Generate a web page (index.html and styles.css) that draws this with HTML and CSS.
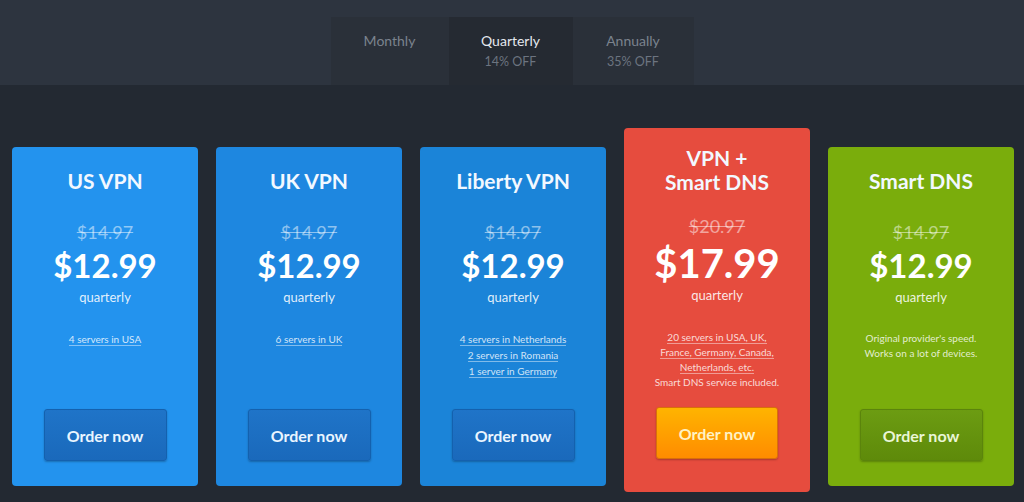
FILE: index.html
```html
<!DOCTYPE html>
<html lang="en">
<head>
  <meta charset="UTF-8">
  <title>Pricing</title>
  <link rel="stylesheet" href="styles.css">
</head>
<body>

  <div class="top">
    <div class="tabs">
      <div class="tab">Monthly</div>
      <div class="tab active">Quarterly<span>14% OFF</span></div>
      <div class="tab">Annually<span>35% OFF</span></div>
    </div>
  </div>

  <div class="plans">
    <div class="plan blue1">
      <h2>US VPN</h2>
      <div class="old">$14.97</div>
      <div class="price">$12.99</div>
      <div class="period">quarterly</div>
      <div class="info"><a>4 servers in USA</a></div>
      <button class="order">Order now</button>
    </div>

    <div class="plan blue2">
      <h2>UK VPN</h2>
      <div class="old">$14.97</div>
      <div class="price">$12.99</div>
      <div class="period">quarterly</div>
      <div class="info"><a>6 servers in UK</a></div>
      <button class="order">Order now</button>
    </div>

    <div class="plan blue3">
      <h2>Liberty VPN</h2>
      <div class="old">$14.97</div>
      <div class="price">$12.99</div>
      <div class="period">quarterly</div>
      <div class="info">
        <a>4 servers in Netherlands</a><br>
        <a>2 servers in Romania</a><br>
        <a>1 server in Germany</a>
      </div>
      <button class="order">Order now</button>
    </div>

    <div class="plan red featured">
      <h2>VPN +<br>Smart DNS</h2>
      <div class="old">$20.97</div>
      <div class="price">$17.99</div>
      <div class="period">quarterly</div>
      <div class="info">
        <a>20 servers in USA, UK,</a><br>
        <a>France, Germany, Canada,</a><br>
        <a>Netherlands, etc.</a><br>
        Smart DNS service included.
      </div>
      <button class="order">Order now</button>
    </div>

    <div class="plan green">
      <h2>Smart DNS</h2>
      <div class="old">$14.97</div>
      <div class="price">$12.99</div>
      <div class="period">quarterly</div>
      <div class="info">
        Original provider's speed.<br>
        Works on a lot of devices.
      </div>
      <button class="order">Order now</button>
    </div>
  </div>

</body>
</html>
```

FILE: styles.css
```css
body {
  margin: 0;
  background: #232932;
  font-family: Lato, 'Open Sans', sans-serif;
  color: #fff;
}

.top {
  background: #2d343f;
  height: 85px;
  display: flex;
  justify-content: center;
  align-items: flex-end;
}

.tabs {
  display: flex;
  height: 68px;
}

.tab {
  background: #2a3039;
  color: #7b838e;
  font-size: 14px;
  width: 118px;
  padding-top: 15px;
  box-sizing: border-box;
  text-align: center;
  line-height: 18px;
}

.tab:nth-child(2) {
  width: 124px;
}

.tab:nth-child(3) {
  width: 121px;
}

.tab span {
  display: block;
  font-size: 12.5px;
  color: #6c7480;
  margin-top: 3px;
}

.tab.active {
  background: #252a32;
  color: #e4e8ee;
}

.plans {
  display: flex;
  gap: 18px;
  padding: 43px 0 0 12px;
  align-items: flex-start;
}

.plan {
  width: 186px;
  height: 339px;
  margin-top: 19px;
  box-sizing: border-box;
  border-radius: 4px;
  padding: 22px 0 25px;
  text-align: center;
  display: flex;
  flex-direction: column;
  align-items: center;
}

.blue1 { background: #2393ee; }
.blue2 { background: #1e87e0; }
.blue3 { background: #1b84d8; }
.red { background: #e64c3e; }
.green { background: #7aad0c; }

.plan h2 {
  margin: 0;
  font-size: 21px;
  line-height: 24px;
  font-weight: 700;
  color: #f2f8ff;
}

.old {
  margin-top: 29px;
  font-size: 18px;
  line-height: 20px;
  color: rgba(255,255,255,0.5);
  text-decoration: line-through;
}

.price {
  margin-top: 3px;
  font-size: 33px;
  line-height: 40px;
  font-weight: 700;
}

.period {
  margin-top: 4px;
  font-size: 13px;
  line-height: 16px;
  color: rgba(255,255,255,0.88);
}

.info {
  margin-top: 26px;
  font-size: 10px;
  line-height: 16px;
  color: rgba(255,255,255,0.8);
}

.info a {
  border-bottom: 1px solid rgba(255,255,255,0.45);
}

.order {
  margin-top: auto;
  width: 123px;
  height: 52px;
  border-radius: 3px;
  border: 1px solid #1461ae;
  background: linear-gradient(#1f74c8, #1a69bb);
  box-shadow: 0 1px 2px rgba(0,0,0,0.25);
  color: #eaf5ff;
  font-family: Lato, sans-serif;
  font-weight: 700;
  font-size: 16px;
  cursor: pointer;
}

.featured {
  height: 364px;
  margin-top: 0;
  padding: 18px 0 33px;
}

.featured .old {
  margin-top: 22px;
}

.featured .price {
  font-size: 40px;
  line-height: 44px;
  margin-top: 5px;
}

.featured .period {
  margin-top: 2px;
}

.featured .info {
  margin-top: 27px;
  line-height: 15px;
}

.featured .order {
  width: 122px;
  border-color: #d9700a;
  background: linear-gradient(#ffb400, #ff8c00);
  color: #fff2c4;
}

.green .info {
  line-height: 15px;
}

.green .order {
  border-color: #5b840c;
  background: linear-gradient(#6c9c12, #5e8a0a);
  color: #eaf6d6;
}
```
